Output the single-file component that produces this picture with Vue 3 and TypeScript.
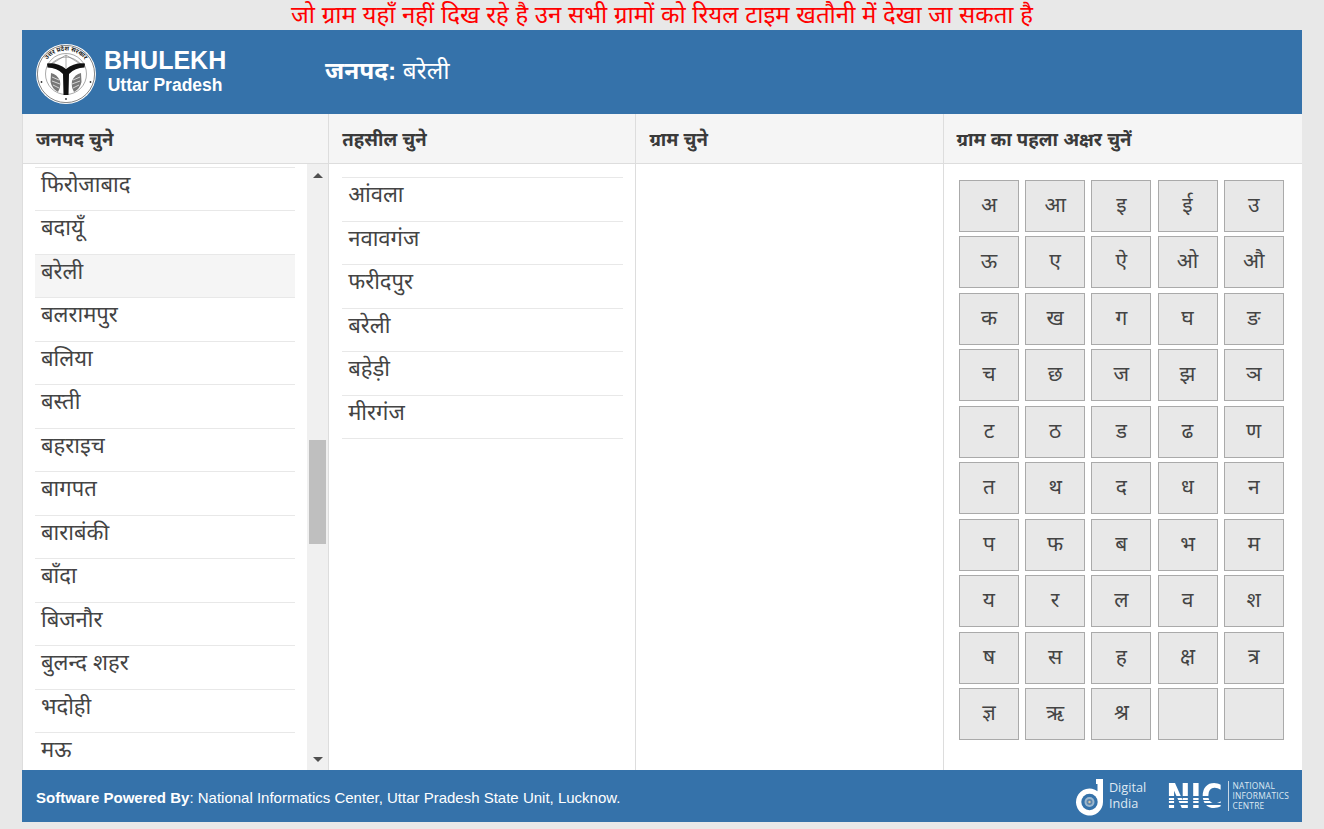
<template>
  <div class="page">
    <p class="notice">जो ग्राम यहाँ नहीं दिख रहे है उन सभी ग्रामों को रियल टाइम खतौनी में देखा जा सकता है</p>

    <div class="wrap">
      <header class="top-bar">
        <div class="brand">
          <svg class="emblem" viewBox="0 0 60 60" width="60" height="60">
            <circle cx="30" cy="30" r="30" fill="#fff" />
            <circle cx="30" cy="30" r="28.6" fill="none" stroke="#333" stroke-width="0.6" />
            <circle cx="30" cy="30" r="20.5" fill="none" stroke="#555" stroke-width="0.5" />
            <defs>
              <path id="ringText" d="M6.6 36 A24 24 0 1 1 53.4 36" />
            </defs>
            <text class="ring-text"><textPath href="#ringText" startOffset="50%" text-anchor="middle">उत्तर प्रदेश सरकार</textPath></text>
            <path d="M14 21 Q30 5 46 21 M14 21 L30 11 L46 21 M30 11 V24" fill="none" stroke="#777" stroke-width="0.6" />
            <path d="M11 19.5 Q22 18.5 30 25 Q38 18.5 49 19.5 L48.5 23.5 Q39 23.5 33 30 L32.5 51 L27.5 51 L27 30 Q21 23.5 11.5 23.5 Z" fill="#111" />
            <path d="M15 29 Q21 30 24 37 Q25 43 22 48 Q16 45 14.5 38 Z M45 29 Q39 30 36 37 Q35 43 38 48 Q44 45 45.5 38 Z" fill="#777" />
            <path d="M16 33 L23 36 M16 37 L24 40 M17 41 L23 44 M44 33 L37 36 M44 37 L36 40 M43 41 L37 44" fill="none" stroke="#eee" stroke-width="0.8" />
            <circle cx="5.5" cy="38" r="0.9" fill="#333" />
            <circle cx="54.5" cy="38" r="0.9" fill="#333" />
            <circle cx="30" cy="55" r="0.9" fill="#333" />
          </svg>
          <div class="brand-text">
            <div class="brand-name">BHULEKH</div>
            <div class="brand-state">Uttar Pradesh</div>
          </div>
        </div>
        <div class="district"><b>जनपद:</b> बरेली</div>
      </header>

      <div class="columns">
        <section class="col">
          <h4 class="col-head">जनपद चुने</h4>
          <div class="scroll-box">
            <ul ref="districtList" class="list district-list" @scroll="syncThumb">
              <li v-for="d in districts" :key="d" :class="{ active: d === selected }">{{ d }}</li>
            </ul>
            <div class="scrollbar">
              <span class="arrow up"></span>
              <span class="thumb" :style="{ top: thumbTop + 'px' }"></span>
              <span class="arrow down"></span>
            </div>
          </div>
        </section>

        <section class="col">
          <h4 class="col-head">तहसील चुने</h4>
          <ul class="list tehsil-list">
            <li v-for="t in tehsils" :key="t">{{ t }}</li>
          </ul>
        </section>

        <section class="col">
          <h4 class="col-head">ग्राम चुने</h4>
        </section>

        <section class="col last">
          <h4 class="col-head">ग्राम का पहला अक्षर चुनें</h4>
          <div class="letters">
            <button v-for="(l, i) in letters" :key="i" type="button">{{ l }}</button>
          </div>
        </section>
      </div>

      <footer class="bottom-bar">
        <div class="credit"><b>Software Powered By</b>: National Informatics Center, Uttar Pradesh State Unit, Lucknow.</div>
        <div class="logos">
          <div class="digital">
            <svg viewBox="0 0 32 38" width="32" height="38">
              <path d="M20 1 H27 V24 A13.5 13.5 0 1 1 21.5 13.2 V6 H20 Z" fill="#fff" />
              <circle cx="13.5" cy="24" r="8.2" fill="#3572aa" />
              <circle cx="13.5" cy="24" r="5" fill="#9db8cf" />
              <circle cx="13.5" cy="24" r="3" fill="#5d86ad" />
              <circle cx="13.5" cy="24" r="1.2" fill="#d8c9a8" />
            </svg>
            <div class="digital-text">Digital<br />India</div>
          </div>
          <div class="nic">
            <span class="nic-mark">NIC</span>
            <div class="nic-text">NATIONAL<br />INFORMATICS<br />CENTRE</div>
          </div>
        </div>
      </footer>
    </div>
  </div>
</template>

<script setup lang="ts">
import { ref, onMounted } from "vue";

const selected = "बरेली";

const districts = [
  "अमरोहा", "अमेठी", "अम्बेडकर नगर", "अयोध्या", "अलीगढ़", "आगरा", "आजमगढ़", "इटावा", "उन्नाव", "एटा",
  "औरैया", "कन्नौज", "कानपुर देहात", "कानपुर नगर", "कासगंज", "कुशीनगर", "कौशाम्बी", "गाजियाबाद", "गाजीपुर", "गोंडा",
  "गोरखपुर", "गौतमबुद्ध नगर", "चन्दौली", "चित्रकूट", "जालौन", "जौनपुर", "झाँसी", "देवरिया", "पीलीभीत", "प्रतापगढ़",
  "प्रयागराज", "फतेहपुर", "फर्रुखाबाद", "फिरोजाबाद", "बदायूँ", "बरेली", "बलरामपुर", "बलिया", "बस्ती", "बहराइच",
  "बागपत", "बाराबंकी", "बाँदा", "बिजनौर", "बुलन्द शहर", "भदोही", "मऊ", "मथुरा", "महराजगंज", "महोबा",
  "मिर्जापुर", "मुजफ्फरनगर", "मुरादाबाद", "मेरठ", "मैनपुरी", "रामपुर", "रायबरेली", "लखनऊ", "लखीमपुर खीरी", "ललितपुर",
  "वाराणसी", "शाहजहाँपुर", "श्रावस्ती", "संत कबीर नगर", "संभल", "सहारनपुर", "सिद्धार्थनगर", "सीतापुर", "सुल्तानपुर", "सोनभद्र",
  "हमीरपुर", "हरदोई", "हाथरस",
];

const tehsils = ["आंवला", "नवावगंज", "फरीदपुर", "बरेली", "बहेड़ी", "मीरगंज"];

const letters = [
  "अ", "आ", "इ", "ई", "उ",
  "ऊ", "ए", "ऐ", "ओ", "औ",
  "क", "ख", "ग", "घ", "ङ",
  "च", "छ", "ज", "झ", "ञ",
  "ट", "ठ", "ड", "ढ", "ण",
  "त", "थ", "द", "ध", "न",
  "प", "फ", "ब", "भ", "म",
  "य", "र", "ल", "व", "श",
  "ष", "स", "ह", "क्ष", "त्र",
  "ज्ञ", "ऋ", "श्र", "", "",
];

const districtList = ref<HTMLElement | null>(null);
const thumbTop = ref(17);

// स्क्रॉलबार का थंब सूची के साथ चलता है
const syncThumb = () => {
  const el = districtList.value;
  if (!el) return;
  const track = el.clientHeight - 34 - 104;
  thumbTop.value = 17 + (el.scrollTop / (el.scrollHeight - el.clientHeight)) * track;
};

onMounted(() => {
  const el = districtList.value;
  if (!el) return;
  el.scrollTop = 1436;
  syncThumb();
});
</script>

<style>
html,
body {
  background: #e8e8e8;
}
</style>

<style scoped>
.page {
  width: 1280px;
  margin: 0 auto;
  font-family: "Liberation Sans", "Noto Sans", sans-serif;
}

.notice {
  margin: 0;
  height: 30px;
  line-height: 30px;
  text-align: center;
  font-size: 24px;
  color: #f00;
  white-space: nowrap;
}

.wrap {
  display: flex;
  flex-direction: column;
  height: 792px;
  background: #fff;
}

.top-bar {
  height: 84px;
  flex: none;
  display: flex;
  align-items: center;
  background: #3572aa;
  color: #fff;
}

.brand {
  width: 303px;
  display: flex;
  align-items: center;
  gap: 8px;
  padding: 4px 0 0 14px;
  box-sizing: border-box;
}

.emblem {
  flex: none;
}

.ring-text {
  font-size: 6.2px;
  font-weight: 700;
  fill: #222;
}

.brand-text {
  text-align: center;
  margin-top: -6px;
}

.brand-name {
  font-size: 25px;
  font-weight: 700;
  line-height: 28px;
}

.brand-state {
  font-size: 17.5px;
  font-weight: 700;
  line-height: 22px;
}

.district {
  font-size: 24.4px;
  line-height: 34px;
  margin-top: -2px;
}

.columns {
  flex: 1;
  min-height: 0;
  display: grid;
  grid-template-columns: 307.2px 307.2px 307.2px 358.4px;
}

.col {
  min-height: 0;
  display: flex;
  flex-direction: column;
  border-right: 1px solid #ddd;
}

.col:first-child {
  border-left: 1px solid #ddd;
}

.col.last {
  border-right: none;
}

.col-head {
  flex: none;
  height: 50px;
  box-sizing: border-box;
  margin: 0;
  padding: 0 12px 0 13px;
  line-height: 51px;
  font-size: 18.6px;
  font-weight: 700;
  color: #3a3a3a;
  background: #f5f5f5;
  border-bottom: 1px solid #ddd;
}

.scroll-box {
  flex: 1;
  min-height: 0;
  display: flex;
}

.list {
  margin: 0;
  padding: 0;
  list-style: none;
}

.list li {
  height: 43.5px;
  box-sizing: border-box;
  padding: 0 6px;
  line-height: 33px;
  font-size: 22px;
  color: #444;
  border-top: 1px solid #e8e8e8;
  white-space: nowrap;
}

.list li.active {
  background: #f5f5f5;
}

.district-list {
  flex: 1;
  min-width: 0;
  height: 606px;
  padding: 3px 12px 22px;
  box-sizing: border-box;
  overflow-y: auto;
  scrollbar-width: none;
}

.tehsil-list {
  padding: 13px 12px 0 13px;
}

.tehsil-list li:last-child {
  height: 44.5px;
  border-bottom: 1px solid #e8e8e8;
}

.scrollbar {
  flex: none;
  position: relative;
  width: 21px;
  display: flex;
  flex-direction: column;
  justify-content: space-between;
  align-items: center;
  padding: 9px 0 8px;
  box-sizing: border-box;
  background: #f0f0f0;
}

.arrow {
  width: 0;
  height: 0;
  border-left: 5px solid transparent;
  border-right: 5px solid transparent;
}

.arrow.up {
  border-bottom: 5px solid #505050;
}

.arrow.down {
  border-top: 5px solid #505050;
}

.thumb {
  position: absolute;
  left: 2px;
  width: 17px;
  height: 104px;
  background: #bfbfbf;
}

.letters {
  display: grid;
  grid-template-columns: repeat(5, 60px);
  grid-auto-rows: 52px;
  column-gap: 6.2px;
  row-gap: 4.45px;
  padding: 16px 0 0 15.4px;
}

.letters button {
  padding: 0 0 4px;
  font: inherit;
  font-size: 21px;
  color: #444;
  background: #e8e8e8;
  border: 1px solid #aaa;
}

.bottom-bar {
  height: 52px;
  flex: none;
  display: flex;
  align-items: center;
  justify-content: space-between;
  padding: 3px 13px 0 14px;
  box-sizing: border-box;
  background: #3572aa;
  color: #fff;
  font-size: 15px;
}

.logos {
  display: flex;
  align-items: center;
  gap: 20px;
  margin-top: -3px;
}

.digital {
  display: flex;
  align-items: flex-start;
  gap: 1px;
  margin-top: 2px;
}

.digital-text {
  font-family: "Open Sans", sans-serif;
  font-size: 12.7px;
  line-height: 16px;
  color: #dfe9f2;
  margin: 1px 0 0;
}

.nic {
  display: flex;
  align-items: center;
  gap: 5px;
}

.nic-mark {
  font-family: "DejaVu Sans", sans-serif;
  font-size: 29px;
  font-weight: 700;
  line-height: 25px;
  height: 25px;
  transform: scaleY(1.16);
  background: linear-gradient(#fff 0 50%, #3572aa 50% 54%, #fff 54% 62%, #3572aa 62% 66%, #fff 66% 74%, #3572aa 74% 78%, #fff 78% 100%);
  background-clip: text;
  -webkit-background-clip: text;
  color: transparent;
}

.nic-text {
  font-family: "Open Sans", sans-serif;
  font-size: 8.4px;
  line-height: 10px;
  letter-spacing: 0.2px;
  color: #dfe9f2;
  padding-left: 4px;
  border-left: 1px solid #c8d8e6;
}
</style>
